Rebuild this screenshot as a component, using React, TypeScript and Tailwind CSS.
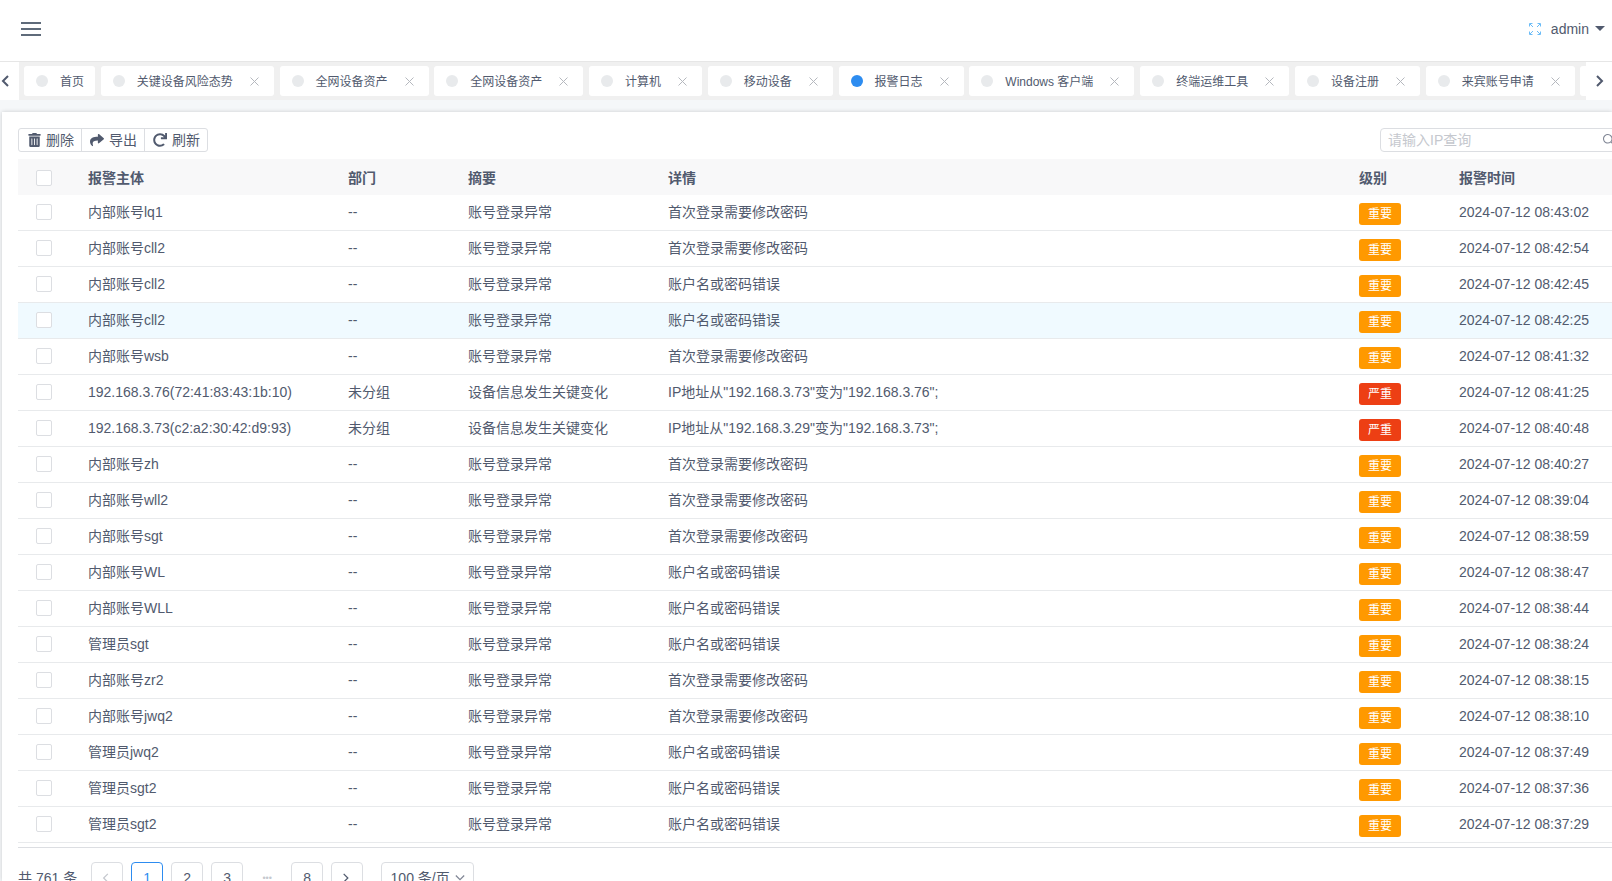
import React from "react";
import { IoIosSearch } from "react-icons/io";
import { FaTrashAlt, FaShare, FaRedo } from "react-icons/fa";

const FONT = "font-['Liberation_Sans','Noto_Sans_CJK_SC',sans-serif]";

const tabs: { t: string; active?: boolean; noClose?: boolean }[] = [
  { t: "首页", noClose: true },
  { t: "关键设备风险态势" },
  { t: "全网设备资产" },
  { t: "全网设备资产" },
  { t: "计算机" },
  { t: "移动设备" },
  { t: "报警日志", active: true },
  { t: "Windows 客户端" },
  { t: "终端运维工具" },
  { t: "设备注册" },
  { t: "来宾账号申请" },
  { t: "访客管理" },
];

const P = "首次登录需要修改密码";
const E = "账户名或密码错误";
const A = "账号登录异常";
type Row = { s: string; d: string; a: string; x: string; l: "重要" | "严重"; t: string; hover?: boolean };
const rows: Row[] = [
  { s: "内部账号lq1", d: "--", a: A, x: P, l: "重要", t: "2024-07-12 08:43:02" },
  { s: "内部账号cll2", d: "--", a: A, x: P, l: "重要", t: "2024-07-12 08:42:54" },
  { s: "内部账号cll2", d: "--", a: A, x: E, l: "重要", t: "2024-07-12 08:42:45" },
  { s: "内部账号cll2", d: "--", a: A, x: E, l: "重要", t: "2024-07-12 08:42:25", hover: true },
  { s: "内部账号wsb", d: "--", a: A, x: P, l: "重要", t: "2024-07-12 08:41:32" },
  { s: "192.168.3.76(72:41:83:43:1b:10)", d: "未分组", a: "设备信息发生关键变化", x: 'IP地址从"192.168.3.73"变为"192.168.3.76";', l: "严重", t: "2024-07-12 08:41:25" },
  { s: "192.168.3.73(c2:a2:30:42:d9:93)", d: "未分组", a: "设备信息发生关键变化", x: 'IP地址从"192.168.3.29"变为"192.168.3.73";', l: "严重", t: "2024-07-12 08:40:48" },
  { s: "内部账号zh", d: "--", a: A, x: P, l: "重要", t: "2024-07-12 08:40:27" },
  { s: "内部账号wll2", d: "--", a: A, x: P, l: "重要", t: "2024-07-12 08:39:04" },
  { s: "内部账号sgt", d: "--", a: A, x: P, l: "重要", t: "2024-07-12 08:38:59" },
  { s: "内部账号WL", d: "--", a: A, x: E, l: "重要", t: "2024-07-12 08:38:47" },
  { s: "内部账号WLL", d: "--", a: A, x: E, l: "重要", t: "2024-07-12 08:38:44" },
  { s: "管理员sgt", d: "--", a: A, x: E, l: "重要", t: "2024-07-12 08:38:24" },
  { s: "内部账号zr2", d: "--", a: A, x: P, l: "重要", t: "2024-07-12 08:38:15" },
  { s: "内部账号jwq2", d: "--", a: A, x: P, l: "重要", t: "2024-07-12 08:38:10" },
  { s: "管理员jwq2", d: "--", a: A, x: E, l: "重要", t: "2024-07-12 08:37:49" },
  { s: "管理员sgt2", d: "--", a: A, x: E, l: "重要", t: "2024-07-12 08:37:36" },
  { s: "管理员sgt2", d: "--", a: A, x: E, l: "重要", t: "2024-07-12 08:37:29" },
];

function Check() {
  return <span className="block w-4 h-4 mx-auto bg-white border border-[#dcdee2] rounded-[2px]" />;
}

function Chevron({ dir, className, sw = 2 }: { dir: "l" | "r" | "d"; className?: string; sw?: number }) {
  const d = dir === "l" ? "M7 1 L2 6 L7 11" : dir === "r" ? "M2 1 L7 6 L2 11" : "M1 3 L6 8 L11 3";
  return (
    <svg viewBox="0 0 12 12" fill="none" stroke="currentColor" strokeWidth={sw} className={className}>
      <path d={d} />
    </svg>
  );
}

function Tab({ t, active, noClose }: { t: string; active?: boolean; noClose?: boolean }) {
  return (
    <div className="flex items-center shrink-0 h-[30px] pl-3 bg-white rounded-[3px] text-xs text-[#515a6e] whitespace-nowrap">
      <span className={`w-3 h-3 rounded-full mr-3 ${active ? "bg-[#2d8cf0]" : "bg-[#e8eaec]"}`} />
      <span className="pt-[2px]">{t}</span>
      {noClose ? (
        <span className="w-[11px]" />
      ) : (
        <svg viewBox="0 0 9 9" className="w-[9px] h-[9px] ml-[17px] mr-[15px] text-[#b5b8be]" stroke="currentColor" strokeWidth="1" fill="none">
          <path d="M0.5 0.5 L8.5 8.5 M8.5 0.5 L0.5 8.5" />
        </svg>
      )}
    </div>
  );
}

function ToolBtn({ icon, label, last, pad }: { icon: React.ReactNode; label: string; last?: boolean; pad: string }) {
  return (
    <button className={`flex items-center justify-start gap-[5px] h-full text-sm text-[#515a6e] ${pad} ${last ? "w-[62px]" : "w-[63px] border-r border-[#dcdee2]"}`}>
      {icon}
      <span>{label}</span>
    </button>
  );
}

function PageBtn({ children, active }: { children: React.ReactNode; active?: boolean }) {
  return (
    <span className={`flex items-center justify-center w-8 h-8 rounded-[4px] border bg-white text-sm ${active ? "border-[#2d8cf0] text-[#2d8cf0]" : "border-[#dcdee2] text-[#515a6e]"}`}>
      {children}
    </span>
  );
}

const cell = "border-b border-[#e8eaec] pb-[2px]";

export default function App() {
  return (
    <div className={`${FONT} w-full h-[881px] overflow-hidden flex flex-col bg-[#f5f7f9] text-[#515a6e]`}>
      <header className="h-[61px] shrink-0 bg-white flex items-center justify-between pl-[21px] pr-[7px] pb-1">
        <svg viewBox="0 0 20 14" className="w-5 h-[14px] text-[#5f6b7a]" fill="currentColor">
          <rect x="0" y="0" width="20" height="2" />
          <rect x="0" y="6" width="20" height="2" />
          <rect x="0" y="12" width="20" height="2" />
        </svg>
        <div className="flex items-center">
          <svg viewBox="0 0 12 12" className="w-3 h-3 mr-[10px] text-[#6cbcf7]" fill="none" stroke="currentColor" strokeWidth="1">
            <path d="M0.5 3.5 V0.5 H3.5 M8.5 0.5 H11.5 V3.5 M0.5 8.5 V11.5 H3.5 M8.5 11.5 H11.5 V8.5 M1 1 L4 4 M11 1 L8 4 M1 11 L4 8 M11 11 L8 8" />
          </svg>
          <span className="text-sm">admin</span>
          <span className="ml-[6px] w-0 h-0 border-x-[5px] border-x-transparent border-t-[5px] border-t-[#515a6e]" />
        </div>
      </header>

      <div className="h-[39px] shrink-0 flex bg-[#f0f0f0] border-t border-[#e6e6e6]">
        <div className="w-[19px] shrink-0 bg-white flex items-center justify-start pl-[1px]">
          <Chevron dir="l" className="w-3 h-3 text-[#515a6e]" />
        </div>
        <div className="flex-1 min-w-0 flex items-center gap-[5.75px] pl-[5px] overflow-hidden">
          {tabs.map((x, i) => (
            <Tab key={i} {...x} />
          ))}
        </div>
        <div className="w-[26px] shrink-0 bg-white flex items-center justify-center pl-[4px]">
          <Chevron dir="r" className="w-3 h-3 text-[#515a6e]" />
        </div>
      </div>

      <div className="flex-1 min-h-0 pt-3 pl-[2px]">
        <main className="h-full bg-white pl-4 pt-4 overflow-hidden shadow-[0_0_4px_rgba(0,0,0,0.18)]">
          <div className="flex justify-between h-6">
            <div className="flex h-6 border border-[#dcdee2] rounded-[3px] overflow-hidden">
              <ToolBtn pad="pl-[9px]" icon={<FaTrashAlt className="w-[13px] h-[14px]" />} label="删除" />
              <ToolBtn pad="pl-[8px]" icon={<FaShare className="w-[14px] h-[14px]" />} label="导出" />
              <ToolBtn pad="pl-[8px]" icon={<FaRedo className="w-[14px] h-[14px]" />} label="刷新" last />
            </div>
            <div className="relative w-[245px] shrink-0 -mr-[13px] h-6 border border-[#dcdee2] rounded-[4px] bg-white text-sm text-[#c5c8ce] pl-[7px] flex items-center">
              请输入IP查询
              <IoIosSearch className="absolute right-[7px] top-[3px] w-4 h-4 text-[#808695]" />
            </div>
          </div>

          <table className="mt-[7px] w-[1610px] table-fixed border-separate border-spacing-0 text-sm text-[#515a6e]">
            <colgroup>
              <col className="w-[52px]" />
              <col className="w-[260px]" />
              <col className="w-[120px]" />
              <col className="w-[200px]" />
              <col className="w-[691px]" />
              <col className="w-[100px]" />
              <col />
            </colgroup>
            <thead>
              <tr className="h-9 bg-[#f8f8f9] font-bold">
                <th className="font-normal pt-[1px]"><Check /></th>
                {["报警主体", "部门", "摘要", "详情", "级别", "报警时间"].map((h) => (
                  <th key={h} className="text-left font-bold pl-[18px] pt-[1px]">{h}</th>
                ))}
              </tr>
            </thead>
            <tbody>
              {rows.map((r, i) => (
                <tr key={i} className={`h-9 ${r.hover ? "bg-[#f0faff]" : "bg-white"}`}>
                  <td className={cell}><Check /></td>
                  <td className={`${cell} pl-[18px] whitespace-nowrap`}>{r.s}</td>
                  <td className={`${cell} pl-[18px]`}>{r.d}</td>
                  <td className={`${cell} pl-[18px]`}>{r.a}</td>
                  <td className={`${cell} pl-[18px]`}>{r.x}</td>
                  <td className="border-b border-[#e8eaec] pl-[18px]">
                    <span className={`flex items-center justify-center w-[42px] h-[22px] mt-[2px] rounded-[3px] text-xs text-white ${r.l === "严重" ? "bg-[#ed3f14]" : "bg-[#ff9900]"}`}>
                      {r.l}
                    </span>
                  </td>
                  <td className={`${cell} pl-[18px] whitespace-nowrap`}>{r.t}</td>
                </tr>
              ))}
            </tbody>
          </table>
          <div className="mt-[4px] h-px bg-[#dcdee2]" />

          <div className="mt-[14px] flex items-center h-8 text-sm">
            <span className="mr-[14px]">共 761 条</span>
            <div className="flex items-center gap-[8px]">
              <PageBtn><Chevron dir="l" sw={1.5} className="w-[10px] h-[10px] text-[#c5c8ce]" /></PageBtn>
              <PageBtn active>1</PageBtn>
              <PageBtn>2</PageBtn>
              <PageBtn>3</PageBtn>
              <span className="w-8 text-center text-[9px] text-[#c5c8ce]">•••</span>
              <PageBtn>8</PageBtn>
              <PageBtn><Chevron dir="r" sw={1.5} className="w-[10px] h-[10px] text-[#515a6e]" /></PageBtn>
            </div>
            <span className="ml-[18px] flex items-center justify-center gap-[5px] w-[93px] h-8 border border-[#dcdee2] rounded-[4px]">
              100 条/页
              <Chevron dir="d" sw={1.5} className="w-[10px] h-[10px] text-[#808695]" />
            </span>
          </div>
        </main>
      </div>
    </div>
  );
}
